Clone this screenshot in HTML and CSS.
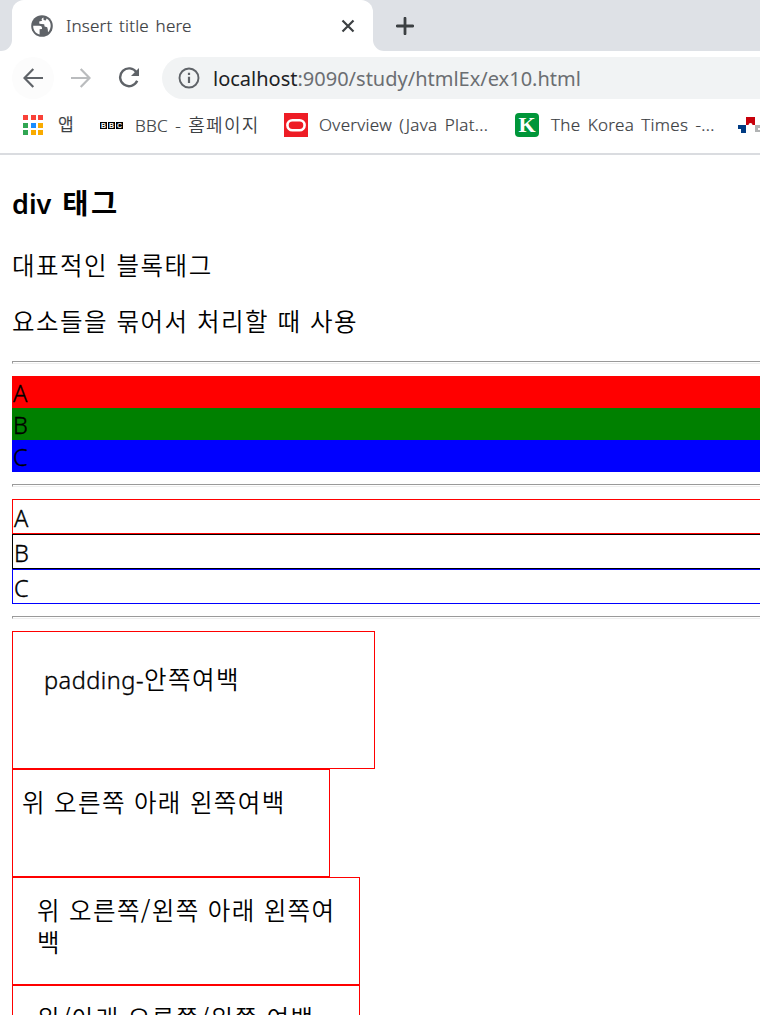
FILE: index.html
```html
<!DOCTYPE html>
<html lang="ko">
<head>
  <meta charset="UTF-8">
  <title>Insert title here</title>
  <link rel="stylesheet" href="styles.css">
</head>
<body>

  <!-- tab strip -->
  <div class="tabstrip">
    <div class="strip-left"></div>
    <div class="tab">
      <svg class="globe" width="22" height="22" viewBox="0 0 22 22">
        <circle cx="11" cy="11" r="10.8" fill="#5f6368"/>
        <path d="M2.2 10.8H8.2C10.4 10.8 11.2 12 11 14L8.6 14.3V19.4C4.6 18.6 2 15 2.2 10.8Z" fill="#fff"/>
        <path d="M12.4 2.4C10.4 3.2 10.2 4.6 11.2 5.8L8.2 6.6L8.4 8.8L13.2 9.2L13.6 11.4L16.2 12.2L16.8 14.6L17 17.2C21 13.2 20.6 6 15.6 3.4L14.8 5.4L12.6 5Z" fill="#fff"/>
      </svg>
      <span class="tab-title">Insert title here</span>
      <svg class="close" width="14" height="14" viewBox="0 0 14 14"><path d="M1.5 1.5L12.5 12.5M12.5 1.5L1.5 12.5" stroke="#3c4043" stroke-width="2.2"/></svg>
    </div>
    <div class="strip-right">
      <svg width="18" height="18" viewBox="0 0 18 18"><path d="M9 1.2V16.8M1.2 9H16.8" stroke="#3c4043" stroke-width="2.8" stroke-linecap="round"/></svg>
    </div>
  </div>

  <!-- toolbar -->
  <div class="toolbar">
    <div class="nav back">
      <svg width="20" height="20" viewBox="0 0 20 20" fill="none" stroke="#5f6368" stroke-width="2.2"><path d="M20 10H1.6M10.3 1L1.5 10L10.3 19"/></svg>
    </div>
    <div class="nav forward">
      <svg width="20" height="20" viewBox="0 0 20 20" fill="none" stroke="#babcbe" stroke-width="2.2"><path d="M0 10H18.4M9.7 1L18.5 10L9.7 19"/></svg>
    </div>
    <div class="nav reload">
      <svg width="22" height="22" viewBox="0 0 22 22"><path d="M18.5 5.4A8.9 8.9 0 1 0 19.2 13.8" fill="none" stroke="#5f6368" stroke-width="2.4"/><path d="M21 1V9H13Z" fill="#5f6368"/></svg>
    </div>
    <div class="omnibox">
      <svg width="22" height="22" viewBox="0 0 22 22"><circle cx="11" cy="11" r="9.5" fill="none" stroke="#5f6368" stroke-width="1.9"/><path d="M9.9 9.7H12.1V16H9.9ZM9.9 5.7H12.1V7.9H9.9Z" fill="#5f6368"/></svg>
      <span class="url"><b>localhost</b>:9090/study/htmlEx/ex10.html</span>
    </div>
  </div>

  <!-- bookmarks -->
  <div class="bookmarks">
    <svg class="apps" width="20" height="20" viewBox="0 0 20 20">
      <path d="M0 0H5V5H0ZM8 0H13V5H8ZM15 0H20V5H15Z" fill="#f94138"/>
      <path d="M0 8H5V13H0ZM0 15H5V20H0Z" fill="#30a652"/>
      <path d="M8 8H13V13H8Z" fill="#1a8cff"/>
      <path d="M15 8H20V13H15ZM8 15H13V20H8ZM15 15H20V20H15Z" fill="#f9ab00"/>
    </svg>
    <span class="bm bm-apps">앱</span>
    <span class="bbc"><i>B</i><i>B</i><i>C</i></span>
    <span class="bm bm-bbc">BBC - <span class="kr">홈페이지</span></span>
    <svg class="oracle" width="24" height="24" viewBox="0 0 24 24"><path d="M0 0H24V24H0Z" fill="#ee1c25"/><rect x="3.4" y="7.2" width="17.2" height="10" rx="5" fill="none" stroke="#fff" stroke-width="2.6"/></svg>
    <span class="bm bm-java">Overview (Java Plat...</span>
    <span class="ktimes">K</span>
    <span class="bm bm-kt">The Korea Times -...</span>
    <svg class="last" width="22" height="16" viewBox="0 0 22 16">
      <path d="M0 8H8V16H3V12H0Z" fill="#003b83"/>
      <path d="M8 0H17V8H14.5A2 2 0 0 0 10.5 8H8Z" fill="#c7000b"/>
      <path d="M17 8H22V11H20V13H22V15H17Z" fill="#b1b3b4"/>
    </svg>
  </div>

  <!-- page -->
  <div class="page">
    <h3>div <span>태그</span></h3>
    <p class="kr">대표적인 블록태그</p>
    <p class="kr">요소들을 묶어서 처리할 때 사용</p>
    <hr>
    <div class="fill red">A</div>
    <div class="fill green">B</div>
    <div class="fill blue">C</div>
    <hr>
    <div class="line line-red">A</div>
    <div class="line line-black">B</div>
    <div class="line line-blue">C</div>
    <hr>
    <div class="box box1">padding-<span class="kr">안쪽여백</span></div>
    <div class="box box2 kr">위 오른쪽 아래 왼쪽여백</div>
    <div class="box box3 kr">위 오른쪽/왼쪽 아래 왼쪽여<br>백</div>
    <div class="box box4 kr">위/아래 오른쪽/왼쪽 여백</div>
  </div>

</body>
</html>
```
FILE: styles.css
```css
* { box-sizing: border-box; }
html { overflow: hidden; }
body { margin: 0; width: 760px; height: 1015px; overflow: hidden; background: #fff; color: #000; font-family: "Noto Sans", "Noto Sans CJK KR", sans-serif; white-space: nowrap; }
svg { display: block; flex: none; }

/* tab strip */
.tabstrip { display: flex; height: 51px; background: #fff; }
.strip-left { width: 12px; background: #dee1e6; border-bottom-right-radius: 11px; }
.tab { display: flex; align-items: center; width: 361px; padding-left: 19px; background: linear-gradient(#dee1e6, #dee1e6) top / 100% 12px no-repeat; position: relative; z-index: 0; }
.tab::before { content: ""; position: absolute; inset: 0; z-index: -1; background: #fff; border-radius: 12px 12px 0 0; }
.tab-title { margin-left: 13px; width: 275px; font-size: 17px; font-weight: 350; letter-spacing: 0.2px; word-spacing: 2px; color: #3c4043; -webkit-text-stroke: 0.2px; }
.strip-right { flex: 1; padding: 17px 0 0 23px; background: #dee1e6; border-bottom-left-radius: 11px; }

/* toolbar */
.toolbar { display: flex; height: 54px; padding: 6px 0 0 12px; }
.nav { display: flex; align-items: center; justify-content: center; width: 42px; height: 42px; }
.back { border-radius: 50%; background: #fcfcfc; }
.forward { margin-left: 6px; }
.reload { margin-left: 6px; }
.omnibox { display: flex; flex: 1; align-items: center; margin-left: 12px; height: 42px; padding-left: 16px; background: #f1f3f4; border-radius: 21px 0 0 21px; }
.url { margin-left: 13px; font-size: 20px; color: #6b6e72; }
.url b { font-weight: 400; color: #202124; }

/* bookmarks bar */
.bookmarks { display: flex; align-items: center; height: 50px; padding: 0 0 8px 23px; border-bottom: 2px solid #dadce0; overflow: hidden; }
.bm { flex: none; font-size: 17px; font-weight: 350; line-height: 24px; letter-spacing: 0.3px; word-spacing: 2.5px; color: #3c4043; -webkit-text-stroke: 0.2px; }
.bm-apps { margin-left: 15px; width: 42px; }
.bm .kr { font-size: 18px; letter-spacing: 1.3px; line-height: 24px; }
.bbc { display: flex; flex: none; gap: 1px; }
.bbc i { width: 7px; height: 7px; background: #000; color: #fff; font: bold 7px/7px "Liberation Sans", sans-serif; text-align: center; }
.bm-bbc { margin-left: 12px; width: 149px; }
.bm-java { margin-left: 11px; width: 196px; }
.ktimes { flex: none; width: 24px; height: 24px; background: #009639; border-radius: 4px; color: #fff; font: bold 22px/24px "Liberation Serif", serif; text-align: center; }
.bm-kt { margin-left: 12px; width: 187px; }

/* page */
.page { width: 760px; height: 860px; overflow: hidden; padding: 33px 0 0 12px; font-size: 23.5px; font-weight: 350; line-height: 33px; -webkit-text-stroke: 0.35px; }
.page h3 { margin: 0; height: 32px; font-size: 27px; font-weight: 600; line-height: 31px; -webkit-text-stroke: 0; }
.page h3 span { margin-left: 4px; font-size: 28.5px; letter-spacing: 2.5px; }
.page p { margin: 29px 0 24px; height: 32px; }
.page p + p { margin: 0 0 24px; }
.kr { font-family: "Noto Sans CJK KR", sans-serif; font-weight: 350; -webkit-text-stroke: 0; }
.page .kr { font-size: 24.5px; line-height: 32px; letter-spacing: 1.5px; }
.page hr { margin: 12px -4px 12px 0; height: 3px; border: 1px solid; border-color: #9a9a9a #eee #eee #9a9a9a; }
.fill { height: 32px; padding-left: 1px; line-height: 34px; }
.red { background: red; }
.green { background: green; }
.blue { background: blue; }
.line { margin-right: -4px; height: 35px; padding-left: 1px; border: 1px solid; line-height: 37px; }
.line-red { border-color: red; }
.line-black { border-color: black; }
.line-blue { border-color: blue; }
.box { border: 1px solid red; }
.box1 { width: 363px; height: 138px; padding: 31px 0 0 31px; letter-spacing: 0.5px; }
.box2 { width: 318px; height: 108px; padding: 16px 0 0 9px; }
.box3 { width: 348px; height: 108px; padding: 16px 0 0 24px; }
.box4 { width: 348px; height: 108px; padding: 16px 0 0 24px; }
.page .box2, .page .box3, .page .box4 { letter-spacing: 1.35px; }
```
